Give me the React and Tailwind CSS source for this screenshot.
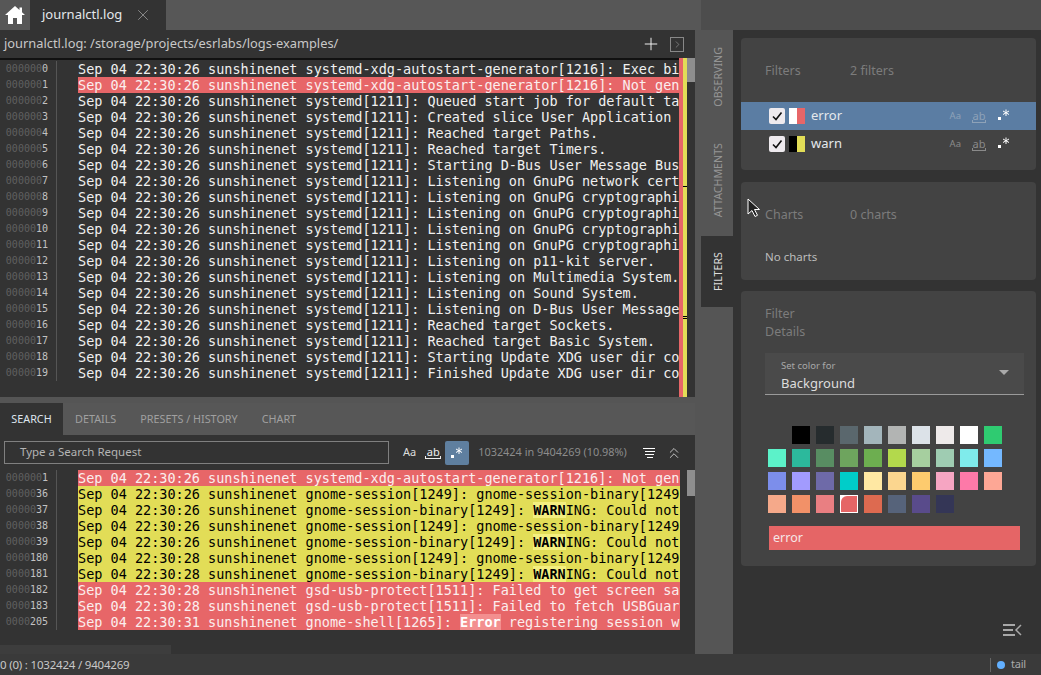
import React from 'react';
import { Plus, X, ChevronRight, ChevronsUp } from 'lucide-react';

const uiFont = { fontFamily: '"Noto Sans", sans-serif' };

const topRows = [
  ['0', 'Sep 04 22:30:26 sunshinenet systemd-xdg-autostart-generator[1216]: Exec binary'],
  ['1', 'Sep 04 22:30:26 sunshinenet systemd-xdg-autostart-generator[1216]: Not generated', 'red'],
  ['2', 'Sep 04 22:30:26 sunshinenet systemd[1211]: Queued start job for default target'],
  ['3', 'Sep 04 22:30:26 sunshinenet systemd[1211]: Created slice User Application'],
  ['4', 'Sep 04 22:30:26 sunshinenet systemd[1211]: Reached target Paths.'],
  ['5', 'Sep 04 22:30:26 sunshinenet systemd[1211]: Reached target Timers.'],
  ['6', 'Sep 04 22:30:26 sunshinenet systemd[1211]: Starting D-Bus User Message Bus'],
  ['7', 'Sep 04 22:30:26 sunshinenet systemd[1211]: Listening on GnuPG network certificate'],
  ['8', 'Sep 04 22:30:26 sunshinenet systemd[1211]: Listening on GnuPG cryptographic agent'],
  ['9', 'Sep 04 22:30:26 sunshinenet systemd[1211]: Listening on GnuPG cryptographic agent'],
  ['10', 'Sep 04 22:30:26 sunshinenet systemd[1211]: Listening on GnuPG cryptographic agent'],
  ['11', 'Sep 04 22:30:26 sunshinenet systemd[1211]: Listening on GnuPG cryptographic agent'],
  ['12', 'Sep 04 22:30:26 sunshinenet systemd[1211]: Listening on p11-kit server.'],
  ['13', 'Sep 04 22:30:26 sunshinenet systemd[1211]: Listening on Multimedia System.'],
  ['14', 'Sep 04 22:30:26 sunshinenet systemd[1211]: Listening on Sound System.'],
  ['15', 'Sep 04 22:30:26 sunshinenet systemd[1211]: Listening on D-Bus User Message Bus'],
  ['16', 'Sep 04 22:30:26 sunshinenet systemd[1211]: Reached target Sockets.'],
  ['17', 'Sep 04 22:30:26 sunshinenet systemd[1211]: Reached target Basic System.'],
  ['18', 'Sep 04 22:30:26 sunshinenet systemd[1211]: Starting Update XDG user dir config'],
  ['19', 'Sep 04 22:30:26 sunshinenet systemd[1211]: Finished Update XDG user dir config'],
];

const session = 'Sep 04 22:30:26 sunshinenet gnome-session[1249]: gnome-session-binary[1249]: ';
const searchRows = [
  ['1', 'Sep 04 22:30:26 sunshinenet systemd-xdg-autostart-generator[1216]: Not generated', 'red'],
  ['36', session + 'WARNING', 'yellow'],
  ['37', null, 'yellow', 'Sep 04 22:30:26 sunshinenet gnome-session-binary[1249]: ', 'WARN', 'ING: Could not parse'],
  ['38', session + 'WARNING', 'yellow'],
  ['39', null, 'yellow', 'Sep 04 22:30:26 sunshinenet gnome-session-binary[1249]: ', 'WARN', 'ING: Could not parse'],
  ['180', session.replace('22:30:26', '22:30:28') + 'WARNING', 'yellow'],
  ['181', null, 'yellow', 'Sep 04 22:30:28 sunshinenet gnome-session-binary[1249]: ', 'WARN', 'ING: Could not parse'],
  ['182', 'Sep 04 22:30:28 sunshinenet gsd-usb-protect[1511]: Failed to get screen saver', 'red'],
  ['183', 'Sep 04 22:30:28 sunshinenet gsd-usb-protect[1511]: Failed to fetch USBGuard', 'red'],
  ['205', null, 'red', 'Sep 04 22:30:31 sunshinenet gnome-shell[1265]: ', 'Error', ' registering session with'],
];

const swatches = [
  'transparent', '#000000', '#262c2e', '#5a676d', '#a3b5bb', '#b2b4b3', '#dce2e8', '#eeeaea', '#ffffff', '#2fcb71',
  '#5cf2c9', '#2cb99c', '#588d62', '#6ea45e', '#6dae50', '#b3d94c', '#a6cf9f', '#9fccb2', '#7febeb', '#74b8ff',
  '#7c8eeb', '#a29bfe', '#6e6aa8', '#00cdc9', '#ffe8a3', '#fbd68f', '#fdcb6e', '#f6a5c2', '#fd79a8', '#fda795',
  '#f5a98a', '#f29168', '#e97f82', '#e56566', '#dd6a50', '#56637a', '#594b8b', '#343656',
];

function RegexIcon() {
  return (
    <svg width="12" height="12" viewBox="0 0 12 12" fill="none" stroke="white" strokeWidth="1">
      <rect x="0" y="8" width="3" height="3" fill="white" stroke="none" />
      <path d="M8 0.500v6.500M5 2l6 3.500M11 2 5 5.500" />
    </svg>
  );
}

function AbIcon({ tone, width }) {
  return (
    <span className={`flex flex-col items-center text-[11px] leading-[11px] ${tone} ${width}`}>
      ab
      <span className="mt-[-1px] block h-[3px] w-full border-x border-b border-current" />
    </span>
  );
}

function LogRow({ row }) {
  const [num, text, tone, before, mark, after] = row;
  const rowTone = tone === 'red' ? 'bg-[#e76668] text-[#fbeeee]' : tone === 'yellow' ? 'bg-[#e2dd57] text-black' : 'text-[#f0f0f0]';
  const markTone = tone === 'red' ? 'bg-[#f38f8f] text-white font-bold' : 'bg-[#f4ef80] font-bold';
  return (
    <div className="flex h-4 leading-4">
      <div className="w-[57px] shrink-0 border-r border-[#555] pr-[8px] text-right text-[10px] text-[#c2c2c2]">
        <span className="text-[#606060]">{'0'.repeat(7 - num.length)}</span>{num}
      </div>
      <div className={`ml-[21px] w-[602px] shrink-0 overflow-hidden whitespace-pre text-[13.5px] ${rowTone}`}>
        {text ?? (
          <>
            {before}<span className={markTone}>{mark}</span>{after}
          </>
        )}
      </div>
    </div>
  );
}

function FilterRow({ name, active, fg, bg }) {
  const tone = active ? 'text-[#8ea2b8]' : 'text-[#8a8a8a]';
  return (
    <div className={`flex h-7 items-center pl-7 pr-[26px] ${active ? 'bg-[#5b7da3]' : ''}`}>
      <span className="flex h-4 w-4 items-center justify-center rounded-[2px] bg-[#eeeaee]">
        <svg width="12" height="12" viewBox="0 0 12 12" fill="none" stroke="#111" strokeWidth="1.6"><path d="M2 6.500 5 9.500 10.500 2.500" /></svg>
      </span>
      <span className={`ml-1 h-4 w-2 ${fg}`} />
      <span className={`h-4 w-2 ${bg}`} />
      <span className="ml-[6px] flex-1 text-[13px] text-[#e4e8ec]">{name}</span>
      <span className={`text-[9.500px] ${tone}`}>Aa</span>
      <span className="ml-[11px]"><AbIcon tone={tone} width="w-[14px]" /></span>
      <span className="ml-[12px] -mt-[3px]"><RegexIcon /></span>
    </div>
  );
}

function SideTab({ label, active, height }) {
  return (
    <div className={`flex w-8 items-center justify-center pl-[2px] ${height} ${active ? 'bg-[#333333]' : ''}`}>
      <span className={`rotate-180 text-[10.700px] [writing-mode:vertical-rl] ${active ? 'text-[#dddddd]' : 'text-[#959595]'}`}>{label}</span>
    </div>
  );
}

export default function App() {
  return (
    <div className="relative flex h-[675px] w-[1041px] flex-col overflow-hidden bg-[#333333]" style={uiFont}>
      {/* top tabs */}
      <div className="flex h-[30px] shrink-0 bg-[#4d4d4d]">
        <div className="flex w-[701px] bg-[#575757]">
          <div className="flex w-[30px] items-center justify-center">
            <svg width="20" height="18" viewBox="0 0 20 18" fill="white"><path d="M10 0 0 9h3v9h5v-6h4v6h5V9h3l-3-2.700V1.500h-2.500v2.600z" /></svg>
          </div>
          <div className="flex w-[136px] items-center bg-[#333333] pl-3 text-[13px] text-[#e4e8ec]">
            journalctl.log
            <X size={18} strokeWidth={1.1} className="ml-[12px] text-[#999]" />
          </div>
        </div>
      </div>

      <div className="flex min-h-0 flex-1">
        <div className="flex w-[695px] flex-col">
          {/* path bar */}
          <div className="flex h-7 shrink-0 items-center pl-1 pr-[11px] text-[12.850px] text-[#c8c8c8] shadow-[0_2px_0_#111]">
            <span className="flex-1">journalctl.log: /storage/projects/esrlabs/logs-examples/</span>
            <Plus size={20} strokeWidth={1.1} className="text-white" />
            <span className="ml-[9px] flex h-[15px] w-[14px] items-center justify-center border border-[#888]">
              <ChevronRight size={11} strokeWidth={1.2} className="text-[#aaa]" />
            </span>
          </div>

          {/* main log */}
          <div className="flex h-[339px] shrink-0 pt-[3px]" style={{ fontFamily: '"DejaVu Sans Mono", monospace' }}>
            <div className="w-[679px] shrink-0">
              {topRows.map((r) => <LogRow key={r[0]} row={r} />)}
            </div>
            <div className="-mt-[3px] w-1 bg-[#e76668]" />
            <div className="relative -mt-[3px] w-1 bg-[#e2dd57]">
              <span className="absolute left-0 top-[128px] h-px w-1 bg-black" />
              <span className="absolute left-0 top-[258px] h-px w-1 bg-black" />
              <span className="absolute left-0 top-[260px] h-px w-1 bg-black" />
            </div>
            <div className="-mt-[3px] w-2"><div className="h-6 bg-[#8e8e8e]" /></div>
          </div>

          <div className="h-[6px] shrink-0 bg-[#555555]" />

          {/* search tabs */}
          <div className="flex h-8 shrink-0 items-center bg-[#575757] text-[10.800px] text-[#a0a0a0]">
            <span className="flex h-full w-[63px] items-center justify-center bg-[#333333] text-[#dfe6ee]">SEARCH</span>
            <span className="ml-3">DETAILS</span>
            <span className="ml-6">PRESETS / HISTORY</span>
            <span className="ml-6">CHART</span>
          </div>

          {/* search bar */}
          <div className="flex h-[35px] shrink-0 items-center pl-1 pr-[12px]">
            <div className="flex h-[23px] w-[385px] items-center border border-[#808080] pb-[2px] pl-[15px] text-[11.500px] text-[#b4b4b4]">Type a Search Request</div>
            <span className="ml-[14px] text-[11px] text-[#dddddd]">Aa</span>
            <span className="ml-[9px]"><AbIcon tone="text-[#eeeeee]" width="w-4" /></span>
            <span className="ml-[4px] flex h-6 w-6 items-center justify-center rounded-[2px] bg-[#5f7f9f]"><RegexIcon /></span>
            <span className="ml-[9px] flex-1 text-[10.900px] text-[#8c8c8c]">1032424 in 9404269 (10.98%)</span>
            <svg width="13" height="12" viewBox="0 0 13 12" fill="none" stroke="white" strokeWidth="1"><path d="M0 1.500h12M2 4.500h10M2 7.500h9M4 10.500h6" /></svg>
            <ChevronsUp size={18} strokeWidth={1.1} className="ml-[9px] text-[#dddddd]" />
          </div>

          {/* search results */}
          <div className="flex h-[160px] shrink-0" style={{ fontFamily: '"DejaVu Sans Mono", monospace' }}>
            <div className="w-[687px] shrink-0">
              {searchRows.map((r) => <LogRow key={r[0]} row={r} />)}
            </div>
            <div className="w-2"><div className="h-[26px] bg-[#8e8e8e]" /></div>
          </div>
          <div className="mt-[15px] h-[9px] w-[171px] shrink-0 bg-[#3d3d3d]" />
        </div>

        {/* side tabs */}
        <div className="flex w-[38px] shrink-0 flex-col bg-[#555555] pl-[6px]">
          <SideTab label="OBSERVING" height="h-[94px]" />
          <SideTab label="ATTACHMENTS" height="h-[112px]" />
          <SideTab label="FILTERS" active height="h-[71px]" />
        </div>

        {/* right panel */}
        <div className="flex w-[308px] shrink-0 flex-col gap-3 pl-2 pr-[5px] pt-2">
          <div className="h-[132px] rounded-[4px] bg-[#434343]">
            <div className="flex h-[64px] items-center pl-6 pt-[2px] text-[12.500px] text-[#7c7c7c]">
              <span className="w-[85px]">Filters</span>
              <span>2 filters</span>
            </div>
            <FilterRow name="error" active fg="bg-white" bg="bg-[#e76668]" />
            <FilterRow name="warn" fg="bg-black" bg="bg-[#e2dd57]" />
          </div>

          <div className="h-[98px] rounded-[4px] bg-[#434343] pl-6">
            <div className="flex h-[64px] items-center pt-[2px] text-[12.500px] text-[#7c7c7c]">
              <span className="w-[85px]">Charts</span>
              <span>0 charts</span>
            </div>
            <div className="pt-[2px] text-[11.500px] text-[#bdbdbd]">No charts</div>
          </div>

          <div className="-mt-px h-[275px] rounded-[4px] bg-[#434343]">
            <div className="px-6 pt-[14px] text-[12.500px] leading-[18px] text-[#7c7c7c]">Filter<br />Details</div>
            <div className="ml-6 mr-3 mt-[12px] flex h-[42px] items-start justify-between border-b border-[#9a9a9a] bg-[#4a4a4a] pl-4 pr-[15px] pt-[6px]">
              <div>
                <div className="text-[9.500px] leading-[14px] text-[#a8a8a8]">Set color for</div>
                <div className="text-[13px] leading-[20px] text-[#dddddd]">Background</div>
              </div>
              <span className="mt-[11px] h-0 w-0 border-x-[5px] border-t-[5px] border-x-transparent border-t-[#aaaaaa]" />
            </div>
            <div className="ml-[27px] mt-[31px] grid w-[234px] grid-cols-[repeat(10,18px)] gap-x-[6px] gap-y-[5px]">
              {swatches.map((c, i) => (
                c === '#e56566' ? (
                  <span key={i} className="h-[18px] w-[18px] border border-white bg-white">
                    <span className="block h-full w-full rounded-tl-[6px] bg-[#e56566]" />
                  </span>
                ) : (
                  <span key={i} className="h-[18px] w-[18px]" style={{ backgroundColor: c }} />
                )
              ))}
            </div>
            <div className="ml-[28px] mt-[13px] flex h-6 w-[251px] items-center bg-[#e56566] pl-1 text-[12.500px] text-[#f6e6e6]">error</div>
          </div>

          <div className="mt-[45px] flex justify-end pr-[14px]">
            <svg width="19" height="14" viewBox="0 0 19 14" fill="none" stroke="#a8a8a8" strokeWidth="2"><path d="M0 2h12M0 7h10M0 12h12" /><path d="M18 2 13 7l5 5" strokeWidth="1.500" /></svg>
          </div>
        </div>
      </div>

      {/* status bar */}
      <div className="flex h-[21px] shrink-0 items-center bg-[#3a3a3a] text-[11.500px] tracking-[-0.2px] text-[#c8c8c8]">
        <span className="flex-1">0 (0) : 1032424 / 9404269</span>
        <span className="h-[14px] w-px bg-[#666]" />
        <span className="ml-[6px] h-2 w-2 rounded-full bg-[#62b0ff]" />
        <span className="ml-[6px] mr-[15px] text-[11px] text-[#aaaaaa]">tail</span>
      </div>

      {/* mouse pointer */}
      <svg className="absolute left-[747px] top-[198px]" width="13" height="20" viewBox="0 0 13 20">
        <path d="M1 1v15l4-3.500 3 6 2.500-1.200-3-5.800h5z" fill="#222" stroke="white" strokeWidth="1" />
      </svg>
    </div>
  );
}
